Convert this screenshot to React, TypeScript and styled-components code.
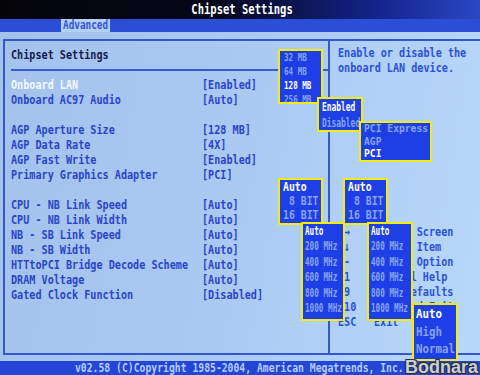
import React from 'react';
import styled, { createGlobalStyle } from 'styled-components';

const GlobalStyle = createGlobalStyle`
  html, body {
    margin: 0;
    padding: 0;
    background: #000;
  }
  body {
    font-family: "DejaVu Sans Mono", "Liberation Mono", monospace;
  }
`;

const Screen = styled.div`
  position: relative;
  width: 480px;
  height: 375px;
  overflow: hidden;
  display: flex;
  flex-direction: column;
  font-family: "DejaVu Sans Mono", "Liberation Mono", monospace;
  font-weight: bold;
  font-size: 13px;
`;

// BIOS glyphs are tall and narrow, so the mono font is squeezed horizontally
const Txt = styled.span<{ $sx?: number; $origin?: string }>`
  display: inline-block;
  white-space: pre;
  transform: scaleX(${(p) => p.$sx ?? 0.78});
  transform-origin: ${(p) => p.$origin ?? 'left'} center;
`;

const Header = styled.div`
  height: 19px;
  flex: none;
  display: flex;
  align-items: center;
  justify-content: center;
  color: #ffffff;
  line-height: 19px;
  padding-left: 4px;
  font-size: 13.5px;
  background: linear-gradient(90deg, #040408 0%, #05071a 45%, #14238a 78%, #2a48c4 100%);
`;

const TabBar = styled.div`
  height: 13px;
  flex: none;
  display: flex;
  padding-left: 61px;
  background: #2a4ed6;
`;

const Tab = styled.div`
  width: 49px;
  height: 13px;
  line-height: 13px;
  font-size: 12px;
  padding-left: 2px;
  box-sizing: border-box;
  color: #3454d6;
  background: #b2cff4;
`;

const Main = styled.div`
  flex: 1;
  display: flex;
  padding: 7px 0 6px 3px;
  background: linear-gradient(100deg, #a3c2ec 0%, #abcaf2 50%, #b8d8fa 100%);
`;

const Frame = styled.div`
  flex: 1;
  display: grid;
  grid-template-columns: 325px 1fr;
  border: 2px solid #3656cc;
  border-right: none;
`;

const LeftPanel = styled.div`
  display: flex;
  flex-direction: column;
  border-right: 2px solid #3656cc;
  padding-top: 6px;
`;

const Title = styled.div`
  height: 15px;
  line-height: 15px;
  padding-left: 6px;
  color: #121c4c;
`;

const Separator = styled.div`
  height: 2px;
  margin: 7px 0 6px 6px;
  background: #3a5ad0;
`;

const Row = styled.div<{ $sel?: boolean }>`
  display: grid;
  grid-template-columns: 191px 1fr;
  height: 15px;
  line-height: 15px;
  padding-left: 6px;
  color: ${(p) => (p.$sel ? '#f6f9ff' : '#2a44c8')};
`;

const Value = styled.span`
  color: #2a44c8;
`;

const Gap = styled.div`
  height: 15px;
`;

const RightPanel = styled.div`
  display: flex;
  flex-direction: column;
  padding: 4px 0 24px 8px;
  color: #2c50d8;
`;

const Help = styled.div`
  line-height: 15px;
`;

const Legend = styled.div`
  margin-top: auto;
  display: grid;
  grid-template-columns: 36px 1fr;
  grid-auto-rows: 15px;
  line-height: 15px;
`;

const Footer = styled.div`
  height: 14px;
  flex: none;
  line-height: 14px;
  padding-left: 75px;
  font-size: 12.5px;
  color: #b4ccff;
  background: #2446d6;
`;

const Popup = styled.div<{ $x: number; $y: number; $w: number; $h: number; $pad: number; $fs: number; $lh: number }>`
  position: absolute;
  left: ${(p) => p.$x}px;
  top: ${(p) => p.$y}px;
  width: ${(p) => p.$w}px;
  height: ${(p) => p.$h}px;
  box-sizing: border-box;
  padding-left: ${(p) => p.$pad}px;
  border: 2px solid #f4ec10;
  background: #1f3fe6;
  overflow: hidden;
  font-size: ${(p) => p.$fs}px;
  line-height: ${(p) => p.$lh}px;
`;

const PopupItem = styled.div<{ $sel?: boolean; $h: number }>`
  height: ${(p) => p.$h}px;
  color: ${(p) => (p.$sel ? '#ffffff' : '#86a4f2')};
`;

const Watermark = styled.div`
  position: absolute;
  right: 2px;
  bottom: -3px;
  font-family: "Liberation Sans", Arial, sans-serif;
  font-weight: bold;
  font-size: 18px;
  color: #c9ced9;
  text-shadow: -1px -1px 0 #2a3040, 1px -1px 0 #2a3040, -1px 1px 0 #2a3040, 1px 1px 0 #2a3040;
`;

type Item = { label: string; value: string; sel?: boolean } | null;

const items: Item[] = [
  { label: 'Onboard LAN', value: '[Enabled]', sel: true },
  { label: 'Onboard AC97 Audio', value: '[Auto]' },
  null,
  { label: 'AGP Aperture Size', value: '[128 MB]' },
  { label: 'AGP Data Rate', value: '[4X]' },
  { label: 'AGP Fast Write', value: '[Enabled]' },
  { label: 'Primary Graphics Adapter', value: '[PCI]' },
  null,
  { label: 'CPU - NB Link Speed', value: '[Auto]' },
  { label: 'CPU - NB Link Width', value: '[Auto]' },
  { label: 'NB - SB Link Speed', value: '[Auto]' },
  { label: 'NB - SB Width', value: '[Auto]' },
  { label: 'HTTtoPCI Bridge Decode Scheme', value: '[Auto]' },
  { label: 'DRAM Voltage', value: '[Auto]' },
  { label: 'Gated Clock Function', value: '[Disabled]' },
];

const legend: [string, string][] = [
  ['←→', 'Select Screen'],
  ['↑↓', 'Select Item'],
  ['+-', 'Change Option'],
  ['F1', 'General Help'],
  ['F9', 'Load Defaults'],
  ['F10', 'Save and Exit'],
  ['ESC', 'Exit'],
];

type PopupDef = {
  x: number; y: number; w: number; h: number; pad: number;
  fs: number; sx: number; lh: number;
  options: string[]; sel: number;
};

const bits = ['Auto', ' 8 BIT', '16 BIT'];
const mhz = ['Auto', '200 MHz', '400 MHz', '600 MHz', '800 MHz', '1000 MHz'];

const popups: PopupDef[] = [
  { x: 278, y: 49, w: 45, h: 55, pad: 4, fs: 11, sx: 0.69, lh: 14, options: ['32 MB', '64 MB', '128 MB', '256 MB'], sel: 2 },
  { x: 317, y: 97, w: 46, h: 35, pad: 3, fs: 12, sx: 0.66, lh: 16, options: ['Enabled', 'Disabled'], sel: 0 },
  { x: 359, y: 121, w: 73, h: 41, pad: 3, fs: 11, sx: 0.88, lh: 12.5, options: ['PCI Express', 'AGP', 'PCI'], sel: 2 },
  { x: 278, y: 178, w: 45, h: 47, pad: 3, fs: 12, sx: 0.82, lh: 14, options: bits, sel: 0 },
  { x: 343, y: 178, w: 45, h: 47, pad: 3, fs: 12, sx: 0.82, lh: 14, options: bits, sel: 0 },
  { x: 301, y: 222, w: 44, h: 99, pad: 2, fs: 12, sx: 0.64, lh: 15.4, options: mhz, sel: 0 },
  { x: 367, y: 222, w: 46, h: 99, pad: 2, fs: 12, sx: 0.64, lh: 15.4, options: mhz, sel: 0 },
  { x: 412, y: 303, w: 46, h: 58, pad: 2, fs: 13, sx: 0.83, lh: 17.5, options: ['Auto', 'High', 'Normal'], sel: 0 },
];

export default function App() {
  return (
    <>
      <GlobalStyle />
      <Screen>
        <Header>
          <Txt $origin="center">Chipset Settings</Txt>
        </Header>
        <TabBar>
          <Tab>
            <Txt>Advanced</Txt>
          </Tab>
        </TabBar>
        <Main>
          <Frame>
            <LeftPanel>
              <Title>
                <Txt>Chipset Settings</Txt>
              </Title>
              <Separator />
              {items.map((it, i) =>
                it ? (
                  <Row key={i} $sel={it.sel}>
                    <Txt>{it.label}</Txt>
                    <Value>
                      <Txt>{it.value}</Txt>
                    </Value>
                  </Row>
                ) : (
                  <Gap key={i} />
                )
              )}
            </LeftPanel>
            <RightPanel>
              <Help>
                <Txt>Enable or disable the</Txt>
                <br />
                <Txt>onboard LAN device.</Txt>
              </Help>
              <Legend>
                {legend.map(([k, d]) => (
                  <React.Fragment key={k}>
                    <Txt>{k}</Txt>
                    <Txt>{d}</Txt>
                  </React.Fragment>
                ))}
              </Legend>
            </RightPanel>
          </Frame>
        </Main>
        <Footer>
          <Txt>v02.58 (C)Copyright 1985-2004, American Megatrends, Inc.</Txt>
        </Footer>

        {popups.map((p, i) => (
          <Popup key={i} $x={p.x} $y={p.y} $w={p.w} $h={p.h} $pad={p.pad} $fs={p.fs} $lh={p.lh}>
            {p.options.map((o, j) => (
              <PopupItem key={j} $h={p.lh} $sel={j === p.sel}>
                <Txt $sx={p.sx}>{o}</Txt>
              </PopupItem>
            ))}
          </Popup>
        ))}
        <Watermark>Bodnara</Watermark>
      </Screen>
    </>
  );
}
